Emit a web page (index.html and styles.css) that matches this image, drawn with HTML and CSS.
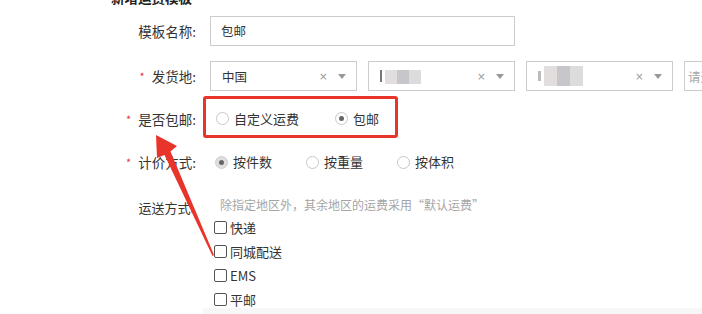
FILE: index.html
```html
<!DOCTYPE html>
<html lang="zh-CN">
<head>
<meta charset="utf-8">
<title>新增运费模板</title>
<link rel="stylesheet" href="styles.css">
</head>
<body>
<div class="page">
  <div class="title">新增运费模板</div>

  <div class="row r1">
    <div class="label">模板名称:</div>
    <div class="input">包邮</div>
  </div>

  <div class="row r2">
    <div class="label"><span class="req">*</span>发货地:</div>
    <div class="selects">
      <div class="select">
        <span class="val">中国</span>
        <span class="clear">×</span><span class="caret"></span>
      </div>
      <div class="select">
        <span class="blur b2"><i class="mark dark"></i><i class="blk l1"></i><i class="blk d1"></i><i class="blk l2"></i></span>
        <span class="clear">×</span><span class="caret"></span>
      </div>
      <div class="select">
        <span class="blur b3"><i class="mark light"></i><i class="blk l1 tall"></i><i class="blk d1 tall"></i><i class="blk l2 tall"></i></span>
        <span class="clear">×</span><span class="caret"></span>
      </div>
      <div class="select last">
        <span class="ph">请选择</span>
      </div>
    </div>
  </div>

  <div class="row r3">
    <div class="label"><span class="req">*</span>是否包邮:</div>
    <div class="highlight">
      <label class="opt first"><span class="radio"></span>自定义运费</label>
      <label class="opt"><span class="radio on"></span>包邮</label>
    </div>
  </div>

  <div class="row r4">
    <div class="label"><span class="req">*</span>计价方式:</div>
    <div class="opts">
      <label class="opt"><span class="radio on gray"></span>按件数</label>
      <label class="opt"><span class="radio"></span>按重量</label>
      <label class="opt"><span class="radio"></span>按体积</label>
    </div>
  </div>

  <div class="row r5">
    <div class="label">运送方式:</div>
    <div class="ship">
      <div class="hint">除指定地区外，其余地区的运费采用“默认运费”</div>
      <ul class="checks">
        <li><span class="box"></span>快递</li>
        <li><span class="box"></span>同城配送</li>
        <li><span class="box"></span>EMS</li>
        <li><span class="box"></span>平邮</li>
      </ul>
    </div>
  </div>
  <div class="band"></div>
</div>

<svg class="arrow" width="702" height="314" viewBox="0 0 702 314" xmlns="http://www.w3.org/2000/svg">
  <polygon points="156,135 177,146 170.5,151.5 214,255 212.5,256 164.5,155 157,158" fill="#e8342b"/>
</svg>
</body>
</html>
```

FILE: styles.css
```css
html, body {
  margin: 0;
  padding: 0;
  width: 702px;
  height: 314px;
  overflow: hidden;
  background: #fff;
}

body {
  position: relative;
  font-family: "Noto Sans CJK SC", "Liberation Sans", sans-serif;
  font-size: 12.5px;
  color: #333;
}

.page {
  display: flex;
  flex-direction: column;
}

.title {
  margin: -11px 0 0 111px;
  font-size: 13.5px;
  line-height: 16px;
  font-weight: bold;
  color: #222;
}

.row {
  display: flex;
  align-items: center;
}

.label {
  flex: none;
  width: 196px;
  margin-right: 14px;
  text-align: right;
  font-size: 13.5px;
  line-height: 16px;
  white-space: nowrap;
}

.req {
  color: #e4393c;
  font-size: 11px;
  margin-right: 7px;
  vertical-align: 1px;
}

.r1 {
  margin-top: 11px;
}

.input {
  box-sizing: border-box;
  width: 305px;
  height: 30px;
  border: 1px solid #ccc;
  padding-left: 10px;
  line-height: 28px;
}

.r2 {
  margin-top: 15px;
}

.selects {
  display: flex;
  gap: 11px;
}

.select {
  box-sizing: border-box;
  flex: none;
  width: 147px;
  height: 30px;
  border: 1px solid #ccc;
  display: flex;
  align-items: center;
  padding: 0 10px 0 11px;
}

.select .val {
  flex: 1;
}

.select .clear {
  color: #999;
  font-size: 13px;
  line-height: 1;
  margin-right: 9px;
  font-family: "DejaVu Sans", sans-serif;
  transform: scale(0.8);
}

.caret {
  width: 0;
  height: 0;
  border-left: 4.5px solid transparent;
  border-right: 4.5px solid transparent;
  border-top: 5px solid #999;
}

.blur {
  flex: 1;
  display: flex;
  align-items: center;
}

.blur i {
  display: block;
}

.mark {
  width: 2px;
  height: 12px;
  margin-right: 3px;
}

.mark.dark {
  background: #777;
}

.mark.light {
  width: 3px;
  height: 10px;
  background: #bbb;
}

.blk {
  width: 12px;
  height: 14px;
  margin-top: 2px;
}

.blk.tall {
  height: 20px;
  margin-top: 0;
}

.b3 .blk {
  width: 13px;
}

.l1 {
  background: #e2dede;
}

.d1 {
  background: #c7c7cb;
}

.l2 {
  background: #dcdcdc;
}

.select.last {
  padding-left: 3px;
}

.ph {
  color: #aaa;
  white-space: nowrap;
}

.r3 {
  margin-top: 5px;
}

.r3 .label {
  margin-right: 7px;
  position: relative;
  top: 2px;
}

.highlight {
  box-sizing: border-box;
  width: 195px;
  height: 42px;
  border: 3px solid #e8342b;
  border-radius: 3px;
  display: flex;
  align-items: center;
  padding: 3px 0 0 10px;
}

.opt {
  display: flex;
  align-items: center;
  font-size: 13px;
  line-height: 16px;
  white-space: nowrap;
}

.highlight .opt.first {
  margin-right: 36px;
}

.radio {
  box-sizing: border-box;
  width: 13px;
  height: 13px;
  border: 1px solid #c8c8c8;
  border-radius: 50%;
  background: #fff;
  margin-right: 5px;
  display: flex;
  align-items: center;
  justify-content: center;
  flex: none;
}

.radio.on::after {
  content: "";
  width: 5px;
  height: 5px;
  border-radius: 50%;
  background: #666;
}

.radio.gray {
  background: #dedede;
  border-color: #d0d0d0;
}

.r4 {
  margin-top: 16px;
}

.opts {
  display: flex;
  margin-left: 5px;
}

.opts .opt {
  margin-right: 34px;
}

.r5 {
  margin-top: 27px;
  align-items: flex-start;
}

.r5 .label {
  padding-top: 3px;
  font-size: 13px;
  width: 194px;
  margin-right: 16px;
}

.ship {
  display: flex;
  flex-direction: column;
}

.hint {
  color: #a5a5a5;
  font-size: 12px;
  line-height: 16px;
  margin-left: 10px;
  white-space: nowrap;
}

.checks {
  list-style: none;
  margin: 2px 0 0 4px;
  padding: 0;
  font-size: 13px;
}

.checks li {
  height: 24px;
  display: flex;
  align-items: center;
}

.box {
  box-sizing: border-box;
  width: 13px;
  height: 13px;
  border: 1px solid #555;
  border-radius: 2px;
  margin-right: 3px;
  flex: none;
}

.band {
  margin: -3px 0 0 203px;
  height: 10px;
  background: #f7f7f7;
}

.arrow {
  position: absolute;
  left: 0;
  top: 0;
  pointer-events: none;
}
```
